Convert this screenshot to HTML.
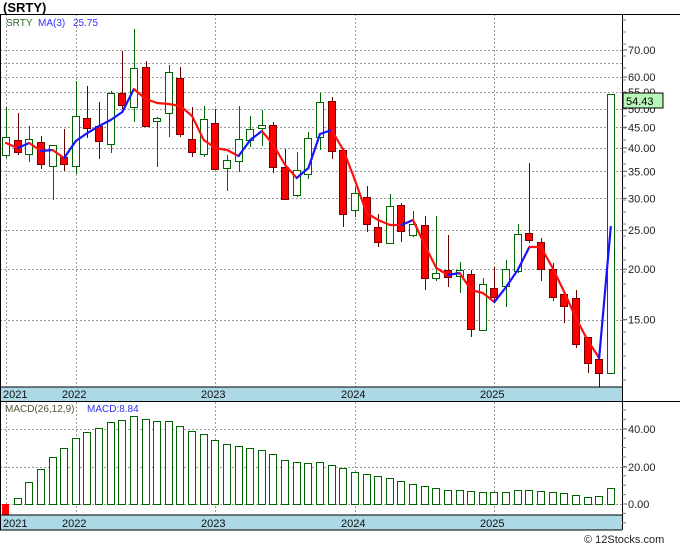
<!DOCTYPE html>
<html><head><meta charset="utf-8"><style>
html,body{margin:0;padding:0;background:#fff;}
svg{display:block;font-family:"Liberation Sans","DejaVu Sans",sans-serif;}
</style></head><body>
<svg id="s" width="680" height="546" xmlns="http://www.w3.org/2000/svg">
<rect width="680" height="546" fill="#fff"/>
<text x="3" y="12" font-size="13" font-weight="bold" fill="#000">(SRTY)</text>
<g id="grid"></g>
<g id="cand"></g>
<g id="ma"></g>
<g id="macd"></g>
<rect x="0" y="387" width="622" height="14" fill="#add8e6"/>
<line x1="0" y1="387" x2="622" y2="387" stroke="#000"/>
<line x1="0" y1="401.5" x2="680" y2="401.5" stroke="#000"/>
<rect x="0" y="515" width="622" height="15" fill="#add8e6"/>
<line x1="0" y1="515" x2="622" y2="515" stroke="#000"/>
<line x1="0" y1="530" x2="622" y2="530" stroke="#000"/>
<line x1="0" y1="14.5" x2="680" y2="14.5" stroke="#000"/>
<line x1="0.5" y1="14" x2="0.5" y2="530" stroke="#000"/>
<line x1="622.5" y1="14" x2="622.5" y2="530" stroke="#000"/>
<g font-size="11" fill="#111">
<text x="3" y="398">2021</text><text x="62" y="398">2022</text><text x="201" y="398">2023</text><text x="341" y="398">2024</text><text x="480" y="398">2025</text>
<text x="3" y="527">2021</text><text x="62" y="527">2022</text><text x="201" y="527">2023</text><text x="341" y="527">2024</text><text x="480" y="527">2025</text>
</g>
<text x="6" y="26" font-size="10" fill="#2a6a2a">SRTY</text>
<text x="38" y="26" font-size="10" fill="#3030ff">MA(3)</text>
<text x="73" y="26" font-size="10" fill="#3030ff">25.75</text>
<text x="5" y="412" font-size="10" fill="#553">MACD(26,12,9)</text>
<text x="87" y="412" font-size="10" fill="#3030ff">MACD:8.84</text>
<g id="axis" font-size="11" fill="#222"></g>
<rect x="623" y="93" width="40" height="15" fill="#b8f5b8" stroke="#000"/>
<text x="626" y="105" font-size="11" fill="#000">54.43</text>
<text x="584" y="543" font-size="11" fill="#222">© 12Stocks.com</text>
</svg>
<script>
var NS="http://www.w3.org/2000/svg";
function el(p,t,a){var e=document.createElementNS(NS,t);for(var k in a)e.setAttribute(k,a[k]);document.getElementById(p).appendChild(e);return e;}
function py(p){return 50+175*Math.log(70/p);}
[70,65,60,55,50,45,40,35,30,25,20,15].forEach(function(p){var y=Math.round(py(p))+0.5;el("grid","line",{x1:0,y1:y,x2:622,y2:y,stroke:"#999","stroke-dasharray":"2,2"});});
[429,467,504].forEach(function(y){el("grid","line",{x1:0,y1:y+0.5,x2:622,y2:y+0.5,stroke:"#999","stroke-dasharray":"2,2"});});
[6,76,215,355,494].forEach(function(x){el("grid","line",{x1:x+0.5,y1:14,x2:x+0.5,y2:530,stroke:"#999","stroke-dasharray":"2,2"});});
[70,60,55,50,45,40,35,30,25,20,15].forEach(function(p){var y=py(p);el("axis","line",{x1:622,y1:y,x2:627,y2:y,stroke:"#555"});var t=el("axis","text",{x:628,y:y+4});t.textContent=p.toFixed(2);});
for(var y=20;y<385;y+=12)el("axis","line",{x1:622,y1:y,x2:626,y2:y,stroke:"#777"});
[[40,429],[20,467],[0,504]].forEach(function(a){el("axis","line",{x1:622,y1:a[1],x2:627,y2:a[1],stroke:"#555"});var t=el("axis","text",{x:628,y:a[1]+4});t.textContent=a[0].toFixed(2);});
for(var y=410;y<530;y+=9.4)el("axis","line",{x1:622,y1:y,x2:626,y2:y,stroke:"#777"});
var C=[["g",137,155,107,158],["r",140,152,113,155],["g",139,154,126,162],["r",142,164,136,169],["g",145,166,145,200],["r",157,164,129,171],["g",116,166,81,174],["r",118,128,86,138],["r",126,141,102,159],["g",93,144,91,153],["r",93,105,51,109],["g",68,107,29,122],["r",67,126,61,127],["g",118,121,117,167],["g",72,113,65,137],["r",78,134,67,137],["r",139,152,107,157],["g",119,154,106,157],["r",123,169,109,169],["g",160,168,155,191],["g",139,161,106,172],["g",129,140,116,147],["g",125,128,110,146],["r",125,167,122,173],["r",167,199,149,200],["g",170,195,152,197],["g",138,174,132,179],["g",102,137,93,150],["r",101,151,97,159],["r",150,214,148,227],["g",193,210,187,217],["r",197,224,186,232],["r",227,242,214,247],["g",206,243,194,243],["r",205,231,203,242],["g",224,235,211,237],["r",225,278,216,290],["g",273,278,216,281],["r",270,277,235,287],["g",270,276,262,293],["r",274,329,270,337],["g",284,330,278,330],["r",288,297,267,302],["g",269,286,260,307],["g",234,271,224,273],["r",233,240,163,243],["r",242,269,238,281],["r",269,297,263,301],["r",294,306,291,323],["r",298,344,290,348],["r",337,363,337,373],["r",359,373,359,387],["g",94,373,94,373]];
function cx(i){return 6+11.63*i;}
C.forEach(function(c,i){var x=Math.round(cx(i));
 if(c[0]=="g"){el("cand","line",{x1:x+0.5,y1:c[3],x2:x+0.5,y2:c[4],stroke:"#006400"});el("cand","rect",{x:x-3.5,y:c[1]+0.5,width:7,height:c[2]-c[1],fill:"#fff",stroke:"#006400"});}
 else{el("cand","line",{x1:x+0.5,y1:c[3],x2:x+0.5,y2:c[4],stroke:"#600"});el("cand","rect",{x:x-3.5,y:c[1]+0.5,width:7,height:Math.max(c[2]-c[1],2),fill:"#f00",stroke:"#700"});}
});
var M=[143,148,143,151,150,158,141,133,126,120,112,89,99,103,104,106,116,140,148,150,156,140,131,145,165,178,168,134,130,150,180,213,220,225,225,220,245,268,275,273,290,293,302,287,270,247,247,268,292,318,340,358,227];
for(var i=1;i<M.length;i++){el("ma","line",{x1:cx(i-1),y1:M[i-1],x2:cx(i),y2:M[i],stroke:M[i]<M[i-1]?"#1515ff":"#ff1010","stroke-width":2.2,"stroke-linecap":"round"});}
var D=[0,498,482,469,457,448,438,432,428,422,420,416,419,421,421,426,431,434,440,444,446,448,450,454,460,462,463,462,465,468,472,474,476,478,481,484,486,488,490,490,491,492,492,492,490,490,491,492,493,495,497,496,488];
D.forEach(function(t,i){var x=Math.round(cx(i));
 if(i==0){el("macd","rect",{x:2,y:504,width:7,height:11,fill:"#f00"});return;}
 el("macd","rect",{x:x-3.5,y:t+0.5,width:7,height:504-t,fill:"#fff",stroke:"#006400"});});
</script>
</body></html>
